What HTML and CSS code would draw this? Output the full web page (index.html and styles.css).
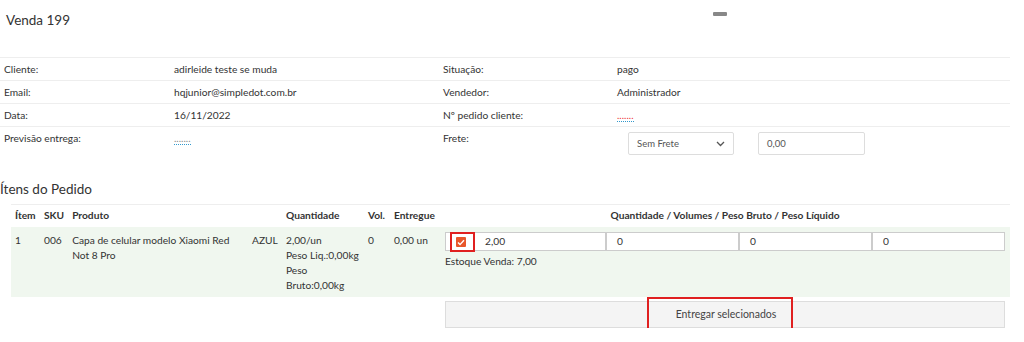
FILE: index.html
```html
<!DOCTYPE html>
<html lang="pt-BR">
<head>
    <meta charset="UTF-8">
    <title>Venda 199</title>
    <link rel="stylesheet" href="styles.css">
</head>
<body>
    <div class="page">
        <div class="header">
            <h2 class="title">Venda 199</h2>
            <span class="minimize"></span>
        </div>

        <table class="info">
            <tr>
                <td class="c1">Cliente:</td>
                <td class="c2">adirleide teste se muda</td>
                <td class="c3">Situação:</td>
                <td>pago</td>
            </tr>
            <tr>
                <td class="c1">Email:</td>
                <td class="c2">hqjunior@simpledot.com.br</td>
                <td class="c3">Vendedor:</td>
                <td>Administrador</td>
            </tr>
            <tr>
                <td class="c1">Data:</td>
                <td class="c2">16/11/2022</td>
                <td class="c3">Nº pedido cliente:</td>
                <td><a class="editable red">.......</a></td>
            </tr>
            <tr class="last">
                <td class="c1">Previsão entrega:</td>
                <td class="c2"><a class="editable">.......</a></td>
                <td class="c3">Frete:</td>
                <td>
                    <div class="frete">
                        <div class="select">Sem Frete
                            <svg width="9" height="6" viewBox="0 0 9 6"><path d="M1 1l3.5 3.5L8 1" fill="none" stroke="#555" stroke-width="1.3"/></svg>
                        </div>
                        <div class="input frete-valor">0,00</div>
                    </div>
                </td>
            </tr>
        </table>

        <h3 class="subtitle">Ítens do Pedido</h3>

        <table class="items">
            <thead>
                <tr>
                    <th class="w-item">Ítem</th>
                    <th class="w-sku">SKU</th>
                    <th class="w-prod">Produto</th>
                    <th class="w-var"></th>
                    <th class="w-qtd">Quantidade</th>
                    <th class="w-vol">Vol.</th>
                    <th class="w-ent">Entregue</th>
                    <th class="center">Quantidade / Volumes / Peso Bruto / Peso Líquido</th>
                </tr>
            </thead>
            <tbody>
                <tr class="selected">
                    <td>1</td>
                    <td>006</td>
                    <td>Capa de celular modelo Xiaomi Red Not 8 Pro</td>
                    <td>AZUL</td>
                    <td>2,00/un<br>Peso Liq.:0,00kg<br>Peso Bruto:0,00kg</td>
                    <td>0</td>
                    <td>0,00 un</td>
                    <td class="entrega">
                        <div class="inputs">
                            <div class="check-box">
                                <span class="check">
                                    <svg width="8" height="7" viewBox="0 0 8 7"><path d="M1 3.6l2 2L7 1.2" fill="none" stroke="#fff" stroke-width="1.4"/></svg>
                                </span>
                            </div>
                            <div class="input first">2,00</div>
                            <div class="input">0</div>
                            <div class="input">0</div>
                            <div class="input">0</div>
                        </div>
                        <div class="estoque">Estoque Venda: 7,00</div>
                    </td>
                </tr>
                <tr>
                    <td colspan="7"></td>
                    <td class="btn-cell">
                        <button class="btn-entregar"><span class="highlight">Entregar selecionados</span></button>
                    </td>
                </tr>
            </tbody>
        </table>
    </div>
</body>
</html>
```

FILE: styles.css
```css
body {
    margin: 0;
    font-family: 'Lato', 'Liberation Sans', sans-serif;
    font-size: 10.2px;
    color: #333;
    background: #fff;
}
.page {
    width: 1010px;
}
.header {
    display: flex;
    align-items: center;
    height: 40px;
    position: relative;
}
.title {
    margin: 0 0 0 6px;
    font-size: 13.5px;
    font-weight: normal;
}
.minimize {
    position: absolute;
    left: 713px;
    top: 12px;
    width: 14px;
    height: 4px;
    background: #888;
    border-radius: 1px;
}
.info {
    width: 100%;
    border-collapse: collapse;
    margin-top: 17px;
}
.info td {
    border-top: 1px solid #eee;
    padding: 5px 4px 5px;
    height: 12px;
    line-height: 12px;
    vertical-align: top;
}
.info .c1 { width: 162px; }
.info .c2 { width: 261px; }
.info .c3 { width: 166px; }
.info .last td {
    padding-bottom: 4px;
}
.editable {
    color: #888;
    border-bottom: 1px dotted #39c;
    font-size: 10px;
}
.editable.red {
    color: #e33;
}
.frete {
    display: flex;
    gap: 24px;
    margin: 0 0 0 11px;
}
.select {
    width: 88px;
    height: 21px;
    border: 1px solid #ddd;
    border-radius: 2px;
    padding: 0 8px;
    display: flex;
    align-items: center;
    justify-content: space-between;
    font-size: 9.5px;
    color: #555;
}
.input {
    border: 1px solid #ccc;
    background: #fff;
    padding: 0 10px;
    display: flex;
    align-items: center;
    box-sizing: border-box;
}
.frete-valor {
    width: 107px;
    height: 23px;
    border-color: #ddd;
    border-radius: 2px;
    padding: 0 8px;
    font-size: 9.5px;
    color: #555;
}
.subtitle {
    margin: 22px 0 0 0;
    font-size: 13.5px;
    font-weight: normal;
    height: 16px;
}
.items {
    width: 999px;
    margin: 7px 0 0 11px;
    border-collapse: collapse;
}
.items th {
    border-top: 1px solid #eee;
    font-weight: bold;
    text-align: left;
    padding: 4px 4px 6px;
    line-height: 12px;
    white-space: nowrap;
}
.items th.center {
    text-align: center;
}
.items td {
    padding: 6px 4px 4px;
    vertical-align: top;
    line-height: 15px;
}
.w-item { width: 21px; }
.w-sku { width: 19px; }
.w-prod { width: 172px; }
.w-var { width: 26px; }
.w-qtd { width: 74px; }
.w-vol { width: 18px; }
.w-ent { width: 42px; }
.selected td {
    background: #f0f7ef;
    height: 60px;
}
.items td.entrega {
    padding: 5px 5px 0 5px;
}
.inputs {
    display: flex;
    height: 19px;
}
.check-box {
    width: 30px;
    border: 1px solid #ccc;
    border-right: none;
    background: #fff;
    box-sizing: border-box;
    position: relative;
}
.check-box::after {
    content: "";
    position: absolute;
    left: 4px;
    top: -1px;
    width: 25px;
    height: 20px;
    border: 2px solid #e02020;
    box-sizing: border-box;
}
.check {
    position: absolute;
    left: 10px;
    top: 4px;
    width: 10px;
    height: 10px;
    background: #e8562a;
    border-radius: 1px;
    display: flex;
    align-items: center;
    justify-content: center;
}
.inputs .input {
    height: 19px;
    width: 133px;
}
.inputs .input.first {
    width: 131px;
    border-left: none;
}
.estoque {
    margin-top: 3px;
}
.items td.btn-cell {
    padding: 4px 5px 0;
}
.btn-entregar {
    width: 560px;
    height: 27px;
    border: 1px solid #ddd;
    background: #f4f4f4;
    font-family: inherit;
    font-size: 10.5px;
    color: #444;
    display: flex;
    justify-content: center;
    align-items: center;
    padding: 0;
    overflow: visible;
}
.highlight {
    border: 2px solid #e02020;
    line-height: 13px;
    padding: 9px 15px 9px 27px;
    margin-right: 10px;
}
```
